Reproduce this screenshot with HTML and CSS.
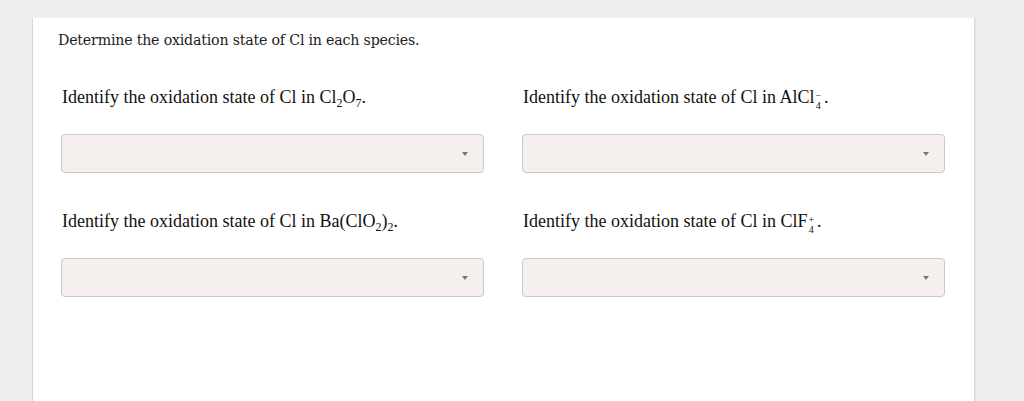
FILE: index.html
```html
<!DOCTYPE html>
<html>
<head>
<meta charset="utf-8">
<link rel="stylesheet" href="styles.css">
</head>
<body>
<div class="card">
  <p class="intro">Determine the oxidation state of Cl in each species.</p>
  <div class="grid">
    <div class="item">
      <p class="label">Identify the oxidation state of Cl in Cl<sub>2</sub>O<sub>7</sub>.</p>
      <div class="select"><span class="arrow"></span></div>
    </div>
    <div class="item">
      <p class="label">Identify the oxidation state of Cl in AlCl<span class="ss"><span class="up">&minus;</span><span class="dn">4</span></span>.</p>
      <div class="select"><span class="arrow"></span></div>
    </div>
    <div class="item">
      <p class="label">Identify the oxidation state of Cl in Ba(ClO<sub>2</sub>)<sub>2</sub>.</p>
      <div class="select"><span class="arrow"></span></div>
    </div>
    <div class="item">
      <p class="label">Identify the oxidation state of Cl in ClF<span class="ss"><span class="up">+</span><span class="dn">4</span></span>.</p>
      <div class="select"><span class="arrow"></span></div>
    </div>
  </div>
</div>
</body>
</html>
```
FILE: styles.css
```css
html, body {
  margin: 0;
  padding: 0;
  background: #eeeeee;
  height: 401px;
  overflow: hidden;
}
.card {
  margin: 18px 0 0 33px;
  width: 941px;
  height: 400px;
  background: #fff;
  box-shadow: -1px 0 0 #d8d8d8, 1px 0 0 #d8d8d8, 2px 0 0 #e4e4e4;
  box-sizing: border-box;
  padding: 12px 0 0 25px;
  font-family: "Liberation Serif", "Times New Roman", serif;
  color: #222;
}
.intro {
  margin: 0;
  font-family: "DejaVu Serif", serif;
  font-size: 14.2px;
  letter-spacing: -0.2px;
  line-height: 20px;
}
.grid {
  display: grid;
  grid-template-columns: 423px 423px;
  column-gap: 38px;
  row-gap: 38px;
  margin: 37px 0 0 3px;
}
.label {
  margin: 0 0 0 1px;
  height: 20px;
  font-size: 18px;
  line-height: 20px;
  color: #111;
  white-space: nowrap;
}
.label sub {
  font-size: 12px;
  vertical-align: -4px;
  line-height: 0;
}
.ss {
  display: inline-block;
  vertical-align: -6px;
  margin-right: 3px;
  margin-left: 1px;
  font-size: 10px;
  line-height: 10px;
  text-align: center;
}
.ss .up, .ss .dn {
  display: block;
  line-height: 10px;
  height: 10px;
}
.select {
  margin-top: 27px;
  height: 39px;
  box-sizing: border-box;
  border: 1px solid #c9c9c9;
  border-radius: 4px;
  background: #f5f0ee;
  display: flex;
  align-items: center;
  justify-content: flex-end;
  padding-right: 15px;
}
.arrow {
  width: 0;
  height: 0;
  border-left: 3px solid transparent;
  border-right: 3px solid transparent;
  border-top: 4px solid #777;
}
```
